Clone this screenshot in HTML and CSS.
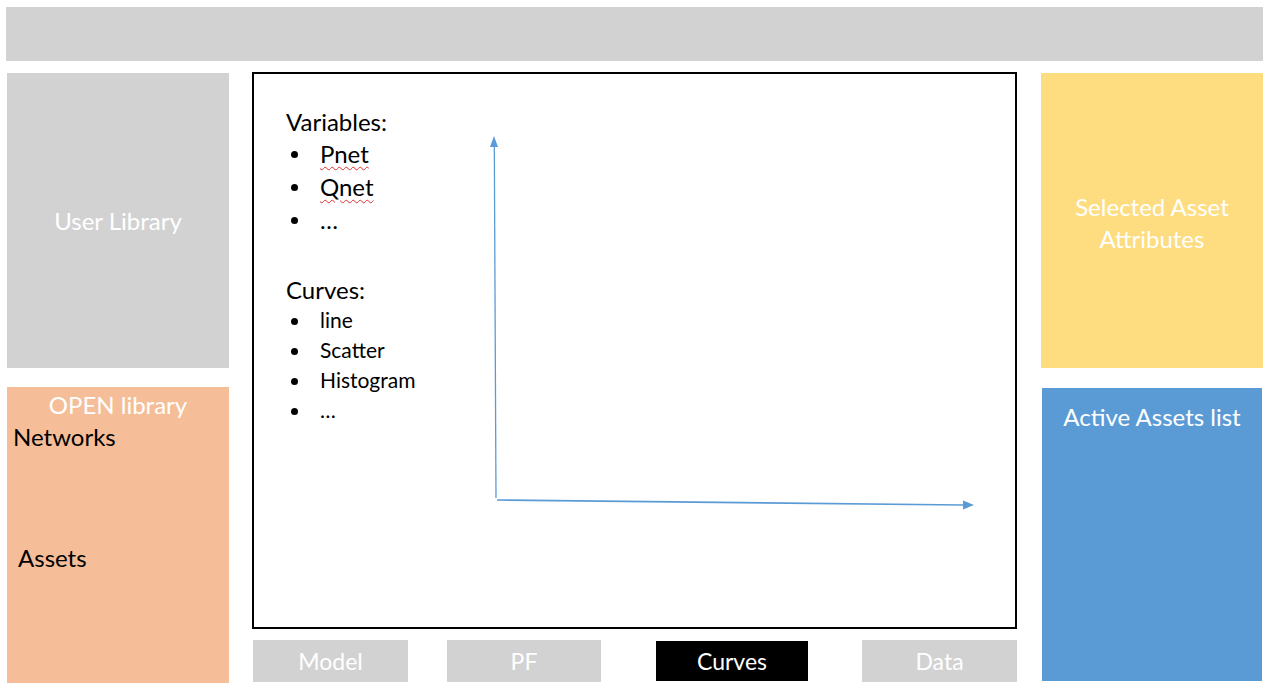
FILE: index.html
```html
<!DOCTYPE html>
<html>
<head>
<meta charset="utf-8">
<link rel="stylesheet" href="styles.css">
</head>
<body>
<div class="topbar"></div>
<div class="main">
  <div class="col left">
    <div class="card user"><span>User Library</span></div>
    <div class="card open">
      <div class="open-title">OPEN library</div>
      <div class="networks">Networks</div>
      <div class="assets">Assets</div>
    </div>
  </div>
  <div class="col center">
    <div class="plot">
      <div class="lists">
        <div class="head">Variables:</div>
        <ul class="vars">
          <li><span class="sp">Pnet</span></li>
          <li><span class="sp">Qnet</span></li>
          <li>…</li>
        </ul>
        <div class="head head2">Curves:</div>
        <ul class="curves">
          <li>line</li>
          <li>Scatter</li>
          <li>Histogram</li>
          <li>…</li>
        </ul>
      </div>
      <svg class="axes" width="765" height="557" viewBox="0 0 765 557">
        <line x1="244" y1="426" x2="242.3" y2="74" stroke="#5b9bd5" stroke-width="1.3"/>
        <polygon points="242,64 238,75 246,75" fill="#5b9bd5"/>
        <line x1="245" y1="428" x2="711" y2="433" stroke="#5b9bd5" stroke-width="1.6"/>
        <polygon points="722,433 711,428.5 711,437.5" fill="#5b9bd5"/>
      </svg>
    </div>
    <div class="tabs">
      <div class="tab">Model</div>
      <div class="tab">PF</div>
      <div class="tab active">Curves</div>
      <div class="tab">Data</div>
    </div>
  </div>
  <div class="col right">
    <div class="card yellow"><span>Selected Asset<br>Attributes</span></div>
    <div class="card blue"><div class="blue-title">Active Assets list</div></div>
  </div>
</div>
</body>
</html>
```
FILE: styles.css
```css
html, body {
  margin: 0;
  padding: 0;
  background: #ffffff;
  font-family: Lato, "Open Sans", "Noto Sans", sans-serif;
}
body {
  width: 1272px;
  height: 690px;
  overflow: hidden;
}
.topbar {
  margin: 7px 0 0 6px;
  width: 1257px;
  height: 54px;
  background: #d2d2d2;
}
.main {
  display: flex;
  margin-top: 11px;
  height: 612px;
}
.col {
  display: flex;
  flex-direction: column;
}
.left {
  margin-left: 7px;
  width: 222px;
  padding-top: 1px;
}
.card {
  color: #ffffff;
  font-size: 24px;
}
.user {
  height: 295px;
  background: #d2d2d2;
  display: flex;
  align-items: center;
  justify-content: center;
}
.open {
  margin-top: 19px;
  height: 296px;
  background: #f5be98;
  position: relative;
}
.open-title {
  text-align: center;
  line-height: 30px;
  margin-top: 3px;
}
.networks {
  color: #000;
  margin-left: 6px;
  line-height: 30px;
  margin-top: 2px;
}
.assets {
  color: #000;
  margin-left: 11px;
  line-height: 30px;
  margin-top: 91px;
}
.center {
  margin-left: 23px;
  width: 765px;
}
.plot {
  position: relative;
  box-sizing: border-box;
  width: 765px;
  height: 557px;
  border: 2px solid #000;
}
.lists {
  position: relative;
  z-index: 1;
  padding: 33px 0 0 32px;
  color: #000;
}
.head {
  font-size: 24px;
  line-height: 30px;
}
.head2 {
  margin-top: 39px;
}
ul {
  list-style: none;
  margin: 0;
  padding: 0;
}
ul li {
  position: relative;
  padding-left: 34px;
}
ul li::before {
  content: "";
  position: absolute;
  left: 5px;
  width: 7px;
  height: 7px;
  border-radius: 50%;
  background: #000;
}
.vars li {
  font-size: 24px;
  line-height: 33px;
}
.vars li::before {
  top: 14px;
}
.curves li {
  font-size: 21px;
  line-height: 30px;
}
.curves li::before {
  top: 13px;
}
.sp {
  text-decoration: underline wavy #e03030;
  text-decoration-thickness: 1px;
  text-underline-offset: 3px;
}
.axes {
  position: absolute;
  left: -2px;
  top: -2px;
}
.tabs {
  display: flex;
  margin-top: 11px;
  padding-left: 1px;
}
.tab {
  width: 155px;
  height: 42px;
  background: #d2d2d2;
  color: #ffffff;
  font-size: 23px;
  display: flex;
  align-items: center;
  justify-content: center;
}
.tab:nth-child(2) {
  width: 154px;
  margin-left: 39px;
}
.tab.active {
  width: 152px;
  height: 40px;
  margin-top: 1px;
  margin-left: 55px;
  background: #000;
}
.tab:nth-child(4) {
  width: 155px;
  margin-left: 54px;
}
.right {
  margin-left: 24px;
  width: 222px;
  padding-top: 1px;
}
.yellow {
  height: 295px;
  background: #fedd80;
  display: flex;
  align-items: center;
  justify-content: center;
  text-align: center;
  line-height: 32px;
}
.yellow span {
  margin-top: 4px;
}
.blue {
  margin-top: 20px;
  margin-left: 1px;
  width: 220px;
  height: 293px;
  background: #5b9bd5;
}
.blue-title {
  text-align: center;
  line-height: 30px;
  margin-top: 14px;
}
```
